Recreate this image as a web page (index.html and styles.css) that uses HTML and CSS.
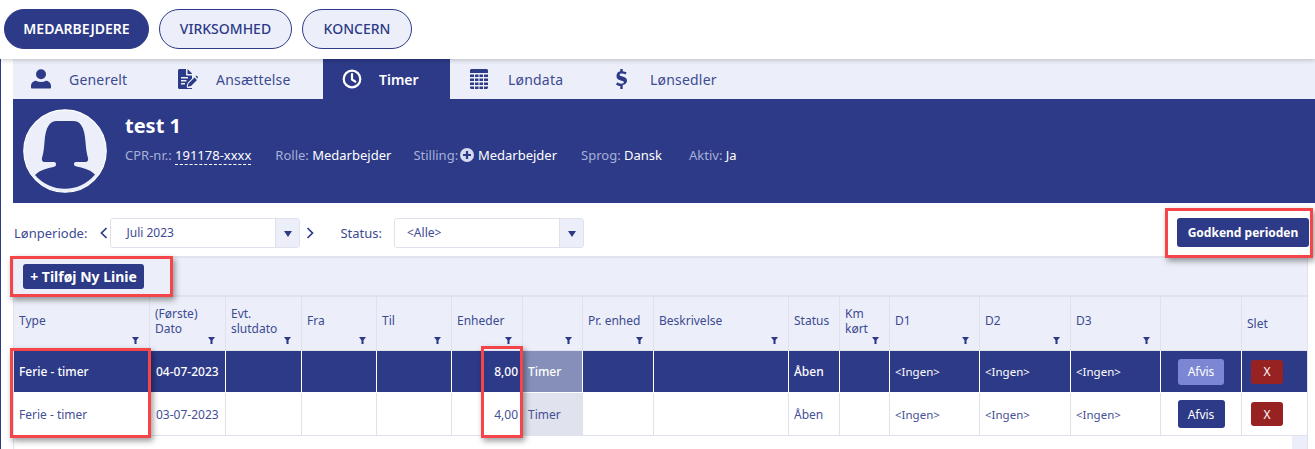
FILE: index.html
```html
<!DOCTYPE html>
<html lang="da">
<head>
<meta charset="utf-8">
<title>Timer</title>
<link rel="stylesheet" href="styles.css">
</head>
<body>
<header class="topbar">
  <a class="pill pill-on">MEDARBEJDERE</a>
  <a class="pill pill-v">VIRKSOMHED</a>
  <a class="pill pill-k">KONCERN</a>
</header>
<div class="page">
  <nav class="tabs">
    <a class="tab tab-1">
      <svg class="ti" viewBox="0 0 20 20"><circle cx="10" cy="5.200" r="5"/><path d="M1 19.500c-.6 0-1-.4-1-1v-1.500c0-3 2.400-5.300 5-5.300 1.500.8 3.200 1.200 5 1.200s3.500-.4 5-1.200c2.600 0 5 2.300 5 5.300v1.500c0 .6-.4 1-1 1z"/></svg>
      <span>Generelt</span>
    </a>
    <a class="tab tab-2">
      <svg class="ti" viewBox="0 0 20 20"><path fill-rule="evenodd" d="M1.500 0H8v5.500c0 .6.400 1 1 1h5v3L9.500 14l-.8 3.500c-.1.600.2 1.100.700 1.500.2.200 4.600.1 4.600.1v.9H1.500C.7 20 0 19.300 0 18.500v-17C0 .7.700 0 1.500 0zM3 8v1.500h7V8zM3 11v1.500h5.500V11zM3 14v1.500h4V14z"/><path d="M9.500 0l4.500 4.500v.5H9.500zM10.500 14.500l6-6 2.500 2.500-6 6-3.300.7zM17.500 7.500l1-1 1.500 1.500-.5 1.500z"/></svg>
      <span>Ansættelse</span>
    </a>
    <a class="tab tab-on tab-3">
      <svg class="ti ti-clock" viewBox="0 0 20 20"><circle cx="10" cy="10" r="8.300"/><path d="M10 5v5.500l3.300 2.200"/></svg>
      <span>Timer</span>
    </a>
    <a class="tab tab-4">
      <svg class="ti" viewBox="0 0 18 20"><path d="M0 1.500C0 .7.700 0 1.500 0h15c.8 0 1.500.7 1.500 1.500V4H0zM0 5.500h4v2.500H0zM5 5.500h3.500v2.500H5zM9.500 5.500H13v2.500H9.500zM14 5.500h4v2.500h-4zM0 9.500h4V12H0zM5 9.500h3.500V12H5zM9.500 9.500H13V12H9.500zM14 9.500h4V12h-4zM0 13.500h4V16H0zM5 13.500h3.500V16H5zM9.500 13.500H13V16H9.500zM14 13.500h4V16h-4zM0 17.500h4V20H1.500C.7 20 0 19.300 0 18.500zM5 17.500h3.500V20H5zM9.500 17.500H13V20H9.500zM14 17.500h4v1c0 .8-.7 1.500-1.500 1.500H14z"/></svg>
      <span>Løndata</span>
    </a>
    <a class="tab tab-5">
      <svg class="ti ti-dollar" viewBox="0 0 11 20"><path d="M4.300 0h2.400v2.200c1.500.1 2.900.6 3.900 1.300L9.500 5.600c-1-.6-2.300-1-3.700-1-1.500 0-2.200.5-2.200 1.200 0 2.200 7.400.9 7.400 6 0 2.300-1.700 3.900-4.300 4.300V20H4.300v-2.900c-1.700-.2-3.300-.8-4.300-1.700l1.200-2.100c1 .8 2.500 1.400 4.100 1.400 1.600 0 2.600-.5 2.600-1.400 0-2.300-7.400-.9-7.400-6C.5 4.100 2 2.600 4.300 2.200z"/></svg>
      <span>Lønsedler</span>
    </a>
  </nav>
  <section class="profile">
    <svg class="avatar" viewBox="0 0 84 84">
      <circle class="av-disc" cx="42" cy="42" r="41.200"/>
      <path class="av-figure" d="M22 53c-2.500 0-3.500-1.500-3-4 1.500-5 2-10 2.500-16 .5-7 1.500-13 4.500-17 2-2.500 4-4 8-4h16c4 0 6.500 1.500 8 4 3 4 4 10 4.500 17 .5 6 1 11 2.500 16 .5 2.500-.5 4-3 4H53c-1.500 0-2 .8-2 2 0 1.500 1 2 2.500 2.500 6 1.300 13 2.500 18.500 8A39 39 0 0 1 12 66c5.500-5.500 12.500-6.700 18.500-8 1.500-.5 2.500-1 2.500-2.500 0-1.500-.5-2.500-2-2.500z"/>
    </svg>
    <div class="pinfo">
      <h1 class="pname">test 1</h1>
      <div class="pmeta">
        <span class="mi">CPR-nr.: <b class="dash">191178-xxxx</b></span>
        <span class="mi">Rolle: <b>Medarbejder</b></span>
        <span class="mi mi-stilling">Stilling: <svg class="plus" viewBox="0 0 14 14"><circle cx="7" cy="7" r="7"/><path d="M7 3v8M3 7h8"/></svg> <b>Medarbejder</b></span>
        <span class="mi">Sprog: <b>Dansk</b></span>
        <span class="mi mi-aktiv">Aktiv: <b>Ja</b></span>
      </div>
    </div>
  </section>
  <section class="filters">
    <label class="flabel">Lønperiode:</label>
    <svg class="chev" viewBox="0 0 8 12"><path d="M6.500 1L1.500 6l5 5"/></svg>
    <div class="combo combo-period"><span class="cval">Juli 2023</span><span class="cbtn"><i class="tri"></i></span></div>
    <svg class="chev chev-r" viewBox="0 0 8 12"><path d="M1.500 1l5 5-5 5"/></svg>
    <label class="flabel flabel-status">Status:</label>
    <div class="combo combo-status"><span class="cval">&lt;Alle&gt;</span><span class="cbtn"><i class="tri"></i></span></div>
    <button class="btn btn-approve">Godkend perioden</button>
  </section>
  <section class="grid">
    <div class="toolbar"><button class="btn btn-add">+ Tilføj Ny Linie</button></div>
    <div class="row head">
      <div class="hc">Type<i class="fil"></i></div>
      <div class="hc">(Første)<br>Dato<i class="fil"></i></div>
      <div class="hc">Evt.<br>slutdato<i class="fil"></i></div>
      <div class="hc">Fra<i class="fil"></i></div>
      <div class="hc">Til<i class="fil"></i></div>
      <div class="hc">Enheder<i class="fil"></i></div>
      <div class="hc"><i class="fil"></i></div>
      <div class="hc">Pr. enhed<i class="fil"></i></div>
      <div class="hc">Beskrivelse<i class="fil"></i></div>
      <div class="hc">Status</div>
      <div class="hc">Km<br>kørt<i class="fil"></i></div>
      <div class="hc">D1<i class="fil"></i></div>
      <div class="hc">D2<i class="fil"></i></div>
      <div class="hc">D3<i class="fil"></i></div>
      <div class="hc"></div>
      <div class="hc hc-slet">Slet</div>
    </div>
    <div class="row data sel">
      <div class="c c-b">Ferie - timer</div>
      <div class="c c-b c-date">04-07-2023</div>
      <div class="c"></div><div class="c"></div><div class="c"></div>
      <div class="c c-r c-b">8,00</div>
      <div class="c c-unit c-b">Timer</div>
      <div class="c"></div><div class="c"></div>
      <div class="c c-b">Åben</div>
      <div class="c"></div>
      <div class="c c-dim">&lt;Ingen&gt;</div><div class="c c-dim">&lt;Ingen&gt;</div><div class="c c-dim">&lt;Ingen&gt;</div>
      <div class="c c-act"><button class="mini mini-afvis mini-soft">Afvis</button></div>
      <div class="c c-act c-last"><button class="mini mini-x">X</button></div>
    </div>
    <div class="row data data-last">
      <div class="c">Ferie - timer</div>
      <div class="c c-date">03-07-2023</div>
      <div class="c"></div><div class="c"></div><div class="c"></div>
      <div class="c c-r">4,00</div>
      <div class="c c-unit">Timer</div>
      <div class="c"></div><div class="c"></div>
      <div class="c">Åben</div>
      <div class="c"></div>
      <div class="c c-dim">&lt;Ingen&gt;</div><div class="c c-dim">&lt;Ingen&gt;</div><div class="c c-dim">&lt;Ingen&gt;</div>
      <div class="c c-act"><button class="mini mini-afvis">Afvis</button></div>
      <div class="c c-act c-last"><button class="mini mini-x">X</button></div>
    </div>
  </section>
</div>
<div class="mark mark-add"></div>
<div class="mark mark-type"></div>
<div class="mark mark-units"></div>
<div class="mark mark-approve"></div>
</body>
</html>
```
FILE: styles.css
```css
* { box-sizing: border-box; }
html, body { margin: 0; height: 449px; overflow: hidden; background: #fff; }
body { font-family: "Noto Sans", sans-serif; color: #2d3a87; font-size: 12px; position: relative; }

.topbar { height: 59px; display: flex; gap: 10px; padding: 9px 0 0 4px; background: #fff; position: relative; z-index: 2; box-shadow: 0 1px 5px rgba(0,0,0,.22); }
.pill { height: 40px; width: 133px; text-align: center; border: 1px solid #2d3a87; border-radius: 20px; background: #eceff9; color: #2d3a87; font-size: 14px; font-weight: 500; line-height: 38px; }
.pill-on { width: 145px; background: #2d3a87; color: #fff; font-weight: 600; }
.pill-k { width: 110px; }

.page { height: 390px; padding-left: 13px; border-left: 1px solid #2d3a87; position: relative; }

.tabs { height: 40px; display: flex; background: #eceff9; margin-left: -1px; }
.tab { display: flex; align-items: center; height: 40px; font-size: 14px; letter-spacing: .2px; color: #3d4a92; }
.tab-1 { width: 150px; padding-left: 18px; }
.tab-2 { width: 160px; padding-left: 15px; }
.tab-3 { width: 127px; padding-left: 19px; }
.tab-4 { width: 141px; padding-left: 19px; }
.tab-5 { padding-left: 25px; }
.tab-1 span { margin-left: 18px; }
.tab-2 span { margin-left: 18px; }
.tab-3 span { margin-left: 17px; }
.tab-4 span { margin-left: 19px; }
.tab-5 span { margin-left: 23px; }
.ti { width: 20px; height: 20px; fill: #2d3a87; flex: none; }
.ti-dollar { width: 11px; }
.tab-on { background: #2d3a87; color: #fff; font-weight: 600; letter-spacing: 0; }
.ti-clock { fill: none; stroke: #fff; stroke-width: 2.200; stroke-linecap: round; stroke-linejoin: round; }

.profile { height: 104px; margin-left: -1px; background: #2d3a87; display: flex; padding: 10px 0 0 10px; }
.avatar { width: 84px; height: 84px; flex: none; }
.av-disc { fill: #eceff9; stroke: #fff; stroke-width: 1.200; }
.av-figure { fill: #2d3a87; }
.pinfo { margin-left: 18px; }
.pname { margin: 4px 0 0; font-size: 20px; font-weight: 700; color: #fff; line-height: 26px; }
.pmeta { display: flex; gap: 24px; margin-top: 6px; color: #a6b0d8; font-size: 13px; line-height: 20px; white-space: nowrap; }
.pmeta b { font-weight: 400; color: #fff; }
.mi-stilling { margin-left: -2px; }
.mi-aktiv { margin-left: 3px; }
.dash { border-bottom: 1px dashed #fff; display: inline-block; line-height: 18px; }
.plus { width: 14px; height: 14px; fill: #d5daee; vertical-align: -2px; margin: 0 1px 0 -2px; }
.plus path { stroke: #2d3a87; stroke-width: 2.200; fill: none; }

.filters { height: 53px; margin-left: -1px; display: flex; align-items: center; padding: 6px 6px 0 1px; position: relative; }
.flabel { font-size: 13px; color: #3d4a92; }
.chev { width: 8px; height: 12px; fill: none; stroke: #2d3a87; stroke-width: 1.700; margin-left: 13px; flex: none; }
.chev-r { margin-left: 6px; }
.flabel-status { margin-left: 26px; }
.combo { height: 30px; border: 1px solid #dfe2ec; border-radius: 3px; display: flex; margin-left: 2px; background: #fff; }
.combo-period { width: 190px; }
.combo-status { width: 190px; margin-left: 12px; }
.cval { flex: 1; padding-left: 15px; font-size: 12px; line-height: 27px; color: #3d4a92; }
.combo-status .cval { padding-left: 12px; }
.cbtn { width: 24px; background: #eceff9; border-left: 1px solid #dfe2ec; display: flex; align-items: center; justify-content: center; }
.tri { width: 0; height: 0; border: 4.500px solid transparent; border-top: 6px solid #2d3a87; border-bottom: 0; margin-top: 3px; }
.btn { background: #2d3a87; color: #fff; border: 0; border-radius: 3px; font-family: inherit; font-weight: 700; }
.btn-approve { margin-left: auto; width: 132px; height: 29px; font-size: 12px; }

.grid { width: 1295px; margin-left: -1px; border-top: 2px solid #e1e4ee; height: 193px; background: linear-gradient(90deg, #fff 1278px, #eceff9 1278px); border-left: 1px solid #dfe2ec; border-right: 1px solid #dfe2ec; }
.toolbar { height: 39px; background: #eceff9; border-bottom: 2px solid #dfe2ec; padding: 6px 0 0 9px; }
.btn-add { height: 25px; width: 121px; font-size: 14px; padding: 0; }
.row { display: grid; grid-template-columns: 136px 76px 76px 75px 75px 71px 60px 71px 135px 51px 50px 90px 91px 90px 81px 50px; }
.head { grid-template-columns: 136px 76px 76px 75px 75px 71px 60px 71px 135px 51px 50px 90px 91px 90px 81px 1fr; height: 54px; background: #eceff9; border-bottom: 1px solid #dfe2ec; }
.hc { position: relative; border-right: 1px solid #dfe2ec; padding: 8px 5px 14px; font-size: 12px; line-height: 15px; color: #3d4a92; display: flex; align-items: center; height: 53px; }
.hc-slet { padding-top: 13px; border-right: 0; }
.fil { position: absolute; right: 10px; bottom: 6px; width: 7px; height: 7px; background: #2d3a87; clip-path: polygon(0 0, 100% 0, 65% 45%, 65% 100%, 35% 100%, 35% 45%); }
.data { height: 42px; background: #fff; border-bottom: 1px solid #dfe2ec; }
.data-last { height: 43px; }
.c { border-right: 1px solid #dfe2ec; padding: 0 5px; font-size: 12px; color: #454f96; display: flex; align-items: center; white-space: nowrap; overflow: hidden; }
.c-date { padding-left: 6px; }
.c-dim { font-size: 11.500px; }
.c-r { justify-content: flex-end; padding-right: 4px; }
.c-unit { background: #e0e3ee; }
.c-act { justify-content: center; padding: 0; }
.c-last { border-right: 0; }
.sel { background: #2d3a87; border-bottom: 1px solid #fff; }
.sel .c { color: #fff; border-right-color: #fff; }
.sel .c-b { font-weight: 500; }
.sel .c-unit { background: #858fb9; }
.mini { border: 0; border-radius: 3px; color: #fff; font-family: inherit; font-size: 12px; padding: 0; }
.mini-afvis { width: 47px; height: 28px; background: #2d3a87; }
.mini-soft { width: 46px; height: 26px; background: #7b87d3; }
.mini-x { width: 32px; height: 24px; background: #962222; }

.mark { position: absolute; z-index: 5; border: 3px solid #f64548; box-shadow: 2px 3px 6px rgba(0,0,0,.4); }
.mark-add { left: 10px; top: 256px; width: 163px; height: 41px; }
.mark-type { left: 10px; top: 348px; width: 141px; height: 90px; }
.mark-units { left: 481px; top: 346px; width: 42px; height: 92px; }
.mark-approve { left: 1165px; top: 208px; width: 148px; height: 50px; }
```
